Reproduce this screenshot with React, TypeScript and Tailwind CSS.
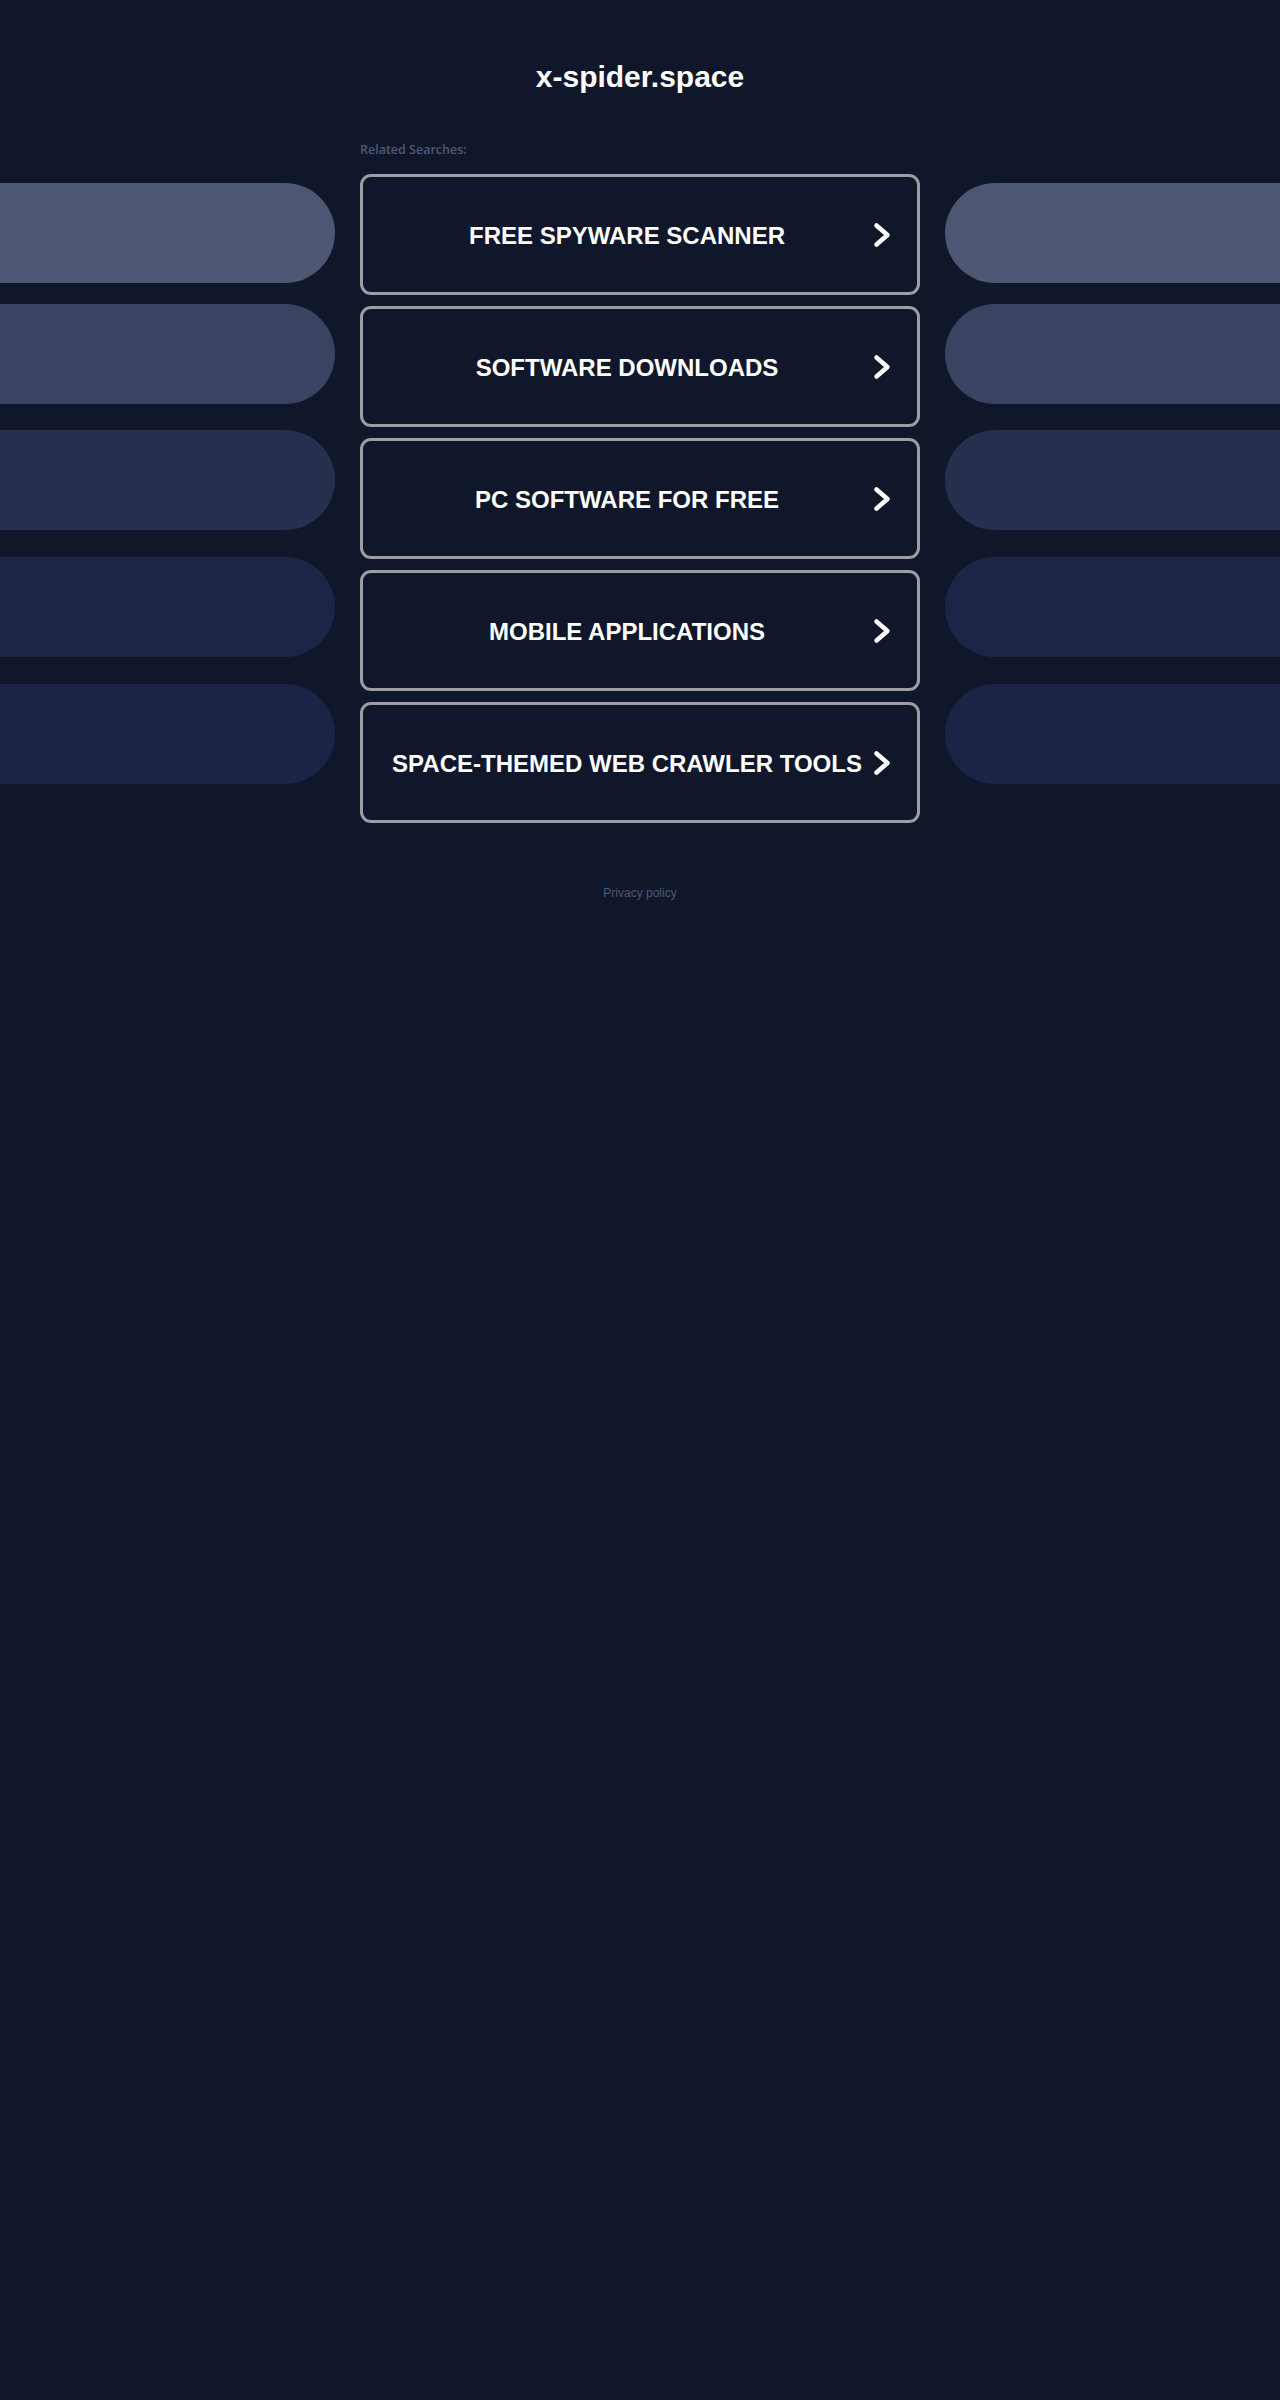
const searches = [
  "FREE SPYWARE SCANNER",
  "SOFTWARE DOWNLOADS",
  "PC SOFTWARE FOR FREE",
  "MOBILE APPLICATIONS",
  "SPACE-THEMED WEB CRAWLER TOOLS",
];

// side pills: top margin and fill, top to bottom
const pills = [
  { mt: "mt-[43px]", bg: "bg-[#4d5673]" },
  { mt: "mt-[21px]", bg: "bg-[#3a4361]" },
  { mt: "mt-[26px]", bg: "bg-[#272f4f]" },
  { mt: "mt-[27px]", bg: "bg-[#1c2547]" },
  { mt: "mt-[27px]", bg: "bg-[#1b2446]" },
];

function Chevron() {
  return (
    <svg width="18" height="26" viewBox="0 0 18 26" className="shrink-0">
      <polyline
        points="3.5,3.5 14.5,13 3.5,22.5"
        fill="none"
        stroke="#ffffff"
        strokeWidth="4.5"
        strokeLinecap="round"
        strokeLinejoin="round"
      />
    </svg>
  );
}

function SideColumn({ side }: { side: "left" | "right" }) {
  return (
    <div className="w-[335px] shrink-0 flex flex-col">
      {pills.map((p, i) => (
        <div
          key={i}
          className={`h-[100px] ${p.mt} ${p.bg} ${side === "left" ? "rounded-r-full" : "rounded-l-full"}`}
        />
      ))}
    </div>
  );
}

export default function App() {
  return (
    <div
      className="min-h-screen bg-[#11172b] text-white"
      style={{ fontFamily: "'Liberation Sans', Arial, sans-serif" }}
    >
      <header className="pt-[59px] text-center">
        <h1 className="text-[30px] leading-[36px] font-bold">x-spider.space</h1>
      </header>

      <div className="mt-[45px] flex gap-[25px]">
        <SideColumn side="left" />

        <div className="w-[560px] shrink-0">
          <p
            className="text-[12.5px] leading-[20px] font-semibold text-[#4f5776]"
            style={{ fontFamily: "'Open Sans', sans-serif" }}
          >
            Related Searches:
          </p>
          <div className="mt-[14px] flex flex-col gap-[11px]">
            {searches.map((s) => (
              <a
                key={s}
                href="#"
                className="h-[121px] flex items-center pl-[18px] pr-[26px] border-[3px] border-[#9e9ea2] rounded-[11px] bg-[#11172b]"
              >
                <span className="flex-1 pt-[2px] text-center text-[24px] leading-[30px] font-bold text-white">{s}</span>
                <Chevron />
              </a>
            ))}
          </div>
        </div>

        <SideColumn side="right" />
      </div>

      <footer className="mt-[62px] text-center text-[12px] leading-[16px]">
        <a href="#" className="text-[#4f5676]">
          Privacy policy
        </a>
      </footer>
    </div>
  );
}
